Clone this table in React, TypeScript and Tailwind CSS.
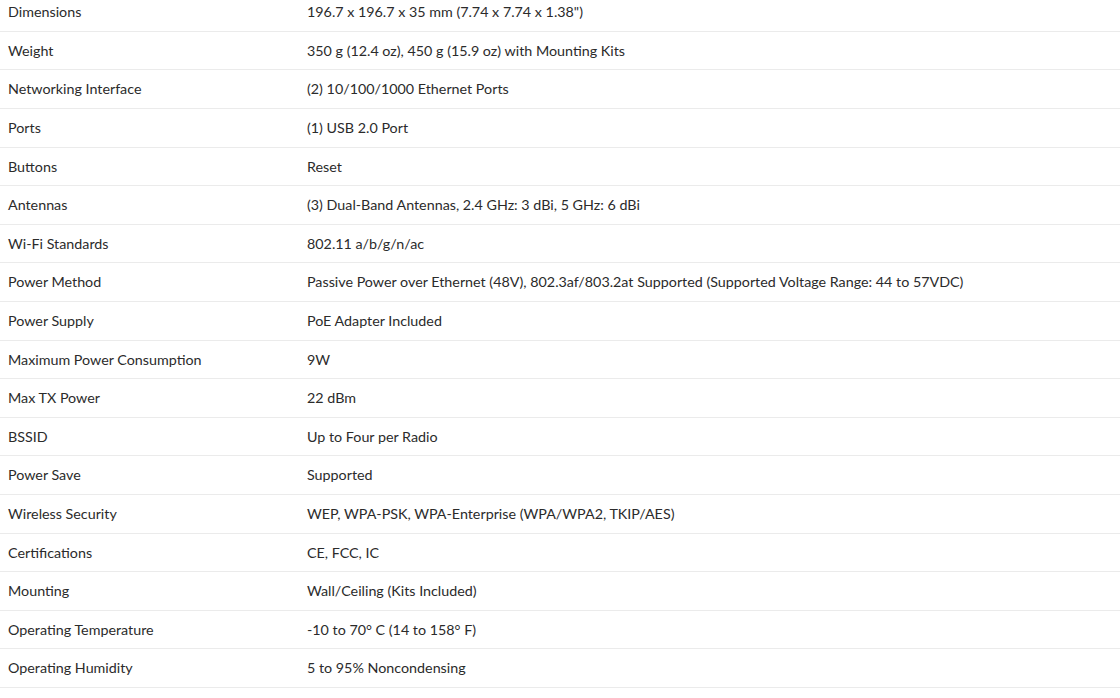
import React from "react";

const SPECS: [string, string][] = [
  ["Dimensions", "196.7 x 196.7 x 35 mm (7.74 x 7.74 x 1.38\")"],
  ["Weight", "350 g (12.4 oz), 450 g (15.9 oz) with Mounting Kits"],
  ["Networking Interface", "(2) 10/100/1000 Ethernet Ports"],
  ["Ports", "(1) USB 2.0 Port"],
  ["Buttons", "Reset"],
  ["Antennas", "(3) Dual-Band Antennas, 2.4 GHz: 3 dBi, 5 GHz: 6 dBi"],
  ["Wi-Fi Standards", "802.11 a/b/g/n/ac"],
  ["Power Method", "Passive Power over Ethernet (48V), 802.3af/803.2at Supported (Supported Voltage Range: 44 to 57VDC)"],
  ["Power Supply", "PoE Adapter Included"],
  ["Maximum Power Consumption", "9W"],
  ["Max TX Power", "22 dBm"],
  ["BSSID", "Up to Four per Radio"],
  ["Power Save", "Supported"],
  ["Wireless Security", "WEP, WPA-PSK, WPA-Enterprise (WPA/WPA2, TKIP/AES)"],
  ["Certifications", "CE, FCC, IC"],
  ["Mounting", "Wall/Ceiling (Kits Included)"],
  ["Operating Temperature", "-10 to 70° C (14 to 158° F)"],
  ["Operating Humidity", "5 to 95% Noncondensing"],
];

export default function App() {
  return (
    <div className="min-h-screen bg-white overflow-hidden font-['Lato',sans-serif] text-[14.3px] text-[#2b2b2b]">
      <div className="mt-[-6.8px]">
        {SPECS.map(([label, value]) => (
          <div
            key={label}
            className="grid grid-cols-[299px_1fr] items-center h-[38.6px] border-b border-[#ebebeb]"
          >
            <div className="pl-2">{label}</div>
            <div className="pl-2">{value}</div>
          </div>
        ))}
      </div>
    </div>
  );
}
